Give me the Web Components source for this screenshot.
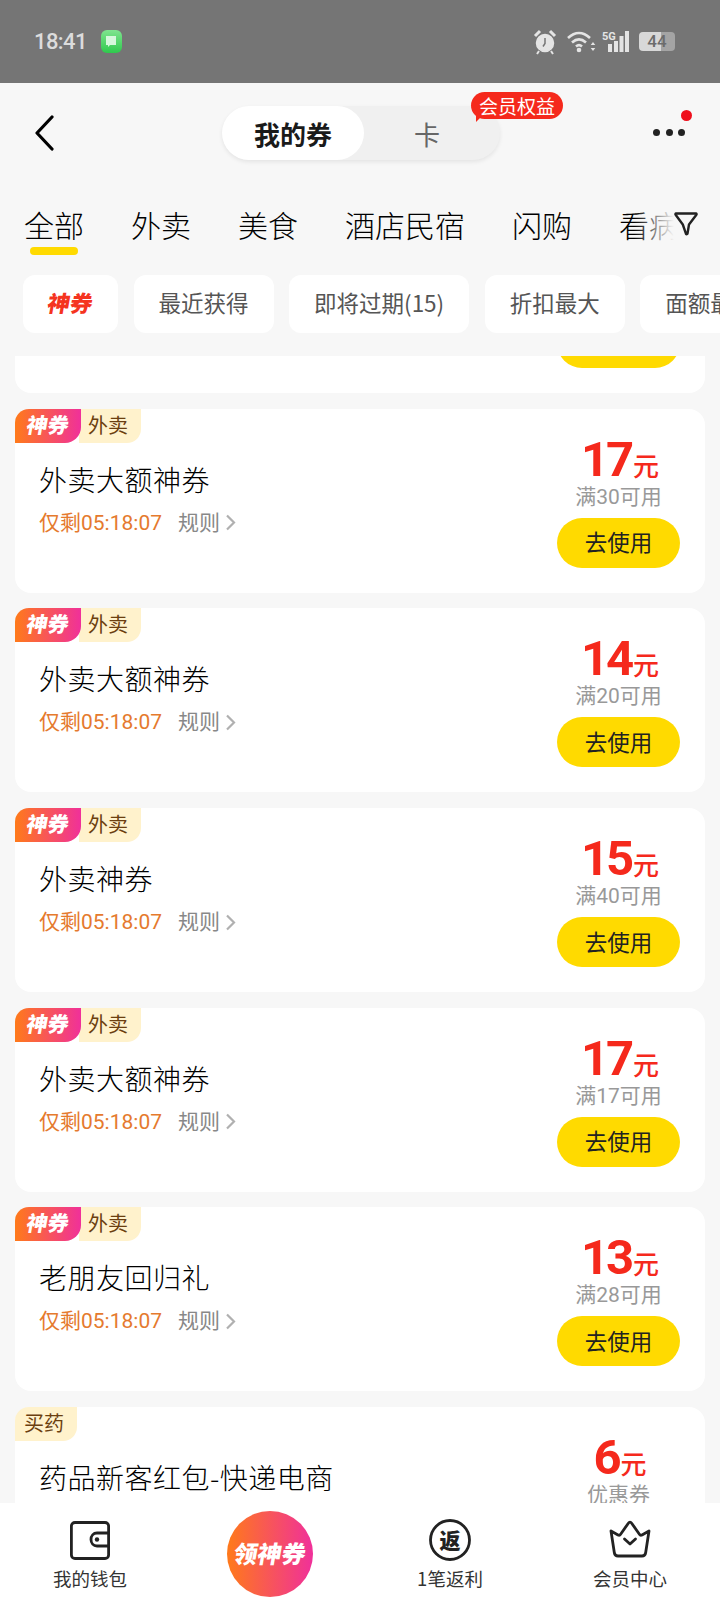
<!DOCTYPE html>
<html lang="zh">
<head>
<meta charset="utf-8">
<title>我的券</title>
<style>
    html, body { margin: 0; padding: 0; }
    body {
        width: 720px;
        height: 1604px;
        overflow: hidden;
        display: flex;
        flex-direction: column;
        background: #f7f7f7;
        color: #222;
        font-family: Roboto, "Noto Sans CJK SC", sans-serif;
    }
</style>
</head>
<body>
<status-bar></status-bar>
<top-nav></top-nav>
<tab-row></tab-row>
<chip-row>
    <filter-chip hot>神券</filter-chip>
    <filter-chip>最近获得</filter-chip>
    <filter-chip>即将过期(15)</filter-chip>
    <filter-chip>折扣最大</filter-chip>
    <filter-chip>面额最大</filter-chip>
</chip-row>
<coupon-list>
    <coupon-card hot tag="外卖" price="20" cond="满40可用">外卖神券</coupon-card>
    <coupon-card hot tag="外卖" price="17" cond="满30可用">外卖大额神券</coupon-card>
    <coupon-card hot tag="外卖" price="14" cond="满20可用">外卖大额神券</coupon-card>
    <coupon-card hot tag="外卖" price="15" cond="满40可用">外卖神券</coupon-card>
    <coupon-card hot tag="外卖" price="17" cond="满17可用">外卖大额神券</coupon-card>
    <coupon-card hot tag="外卖" price="13" cond="满28可用">老朋友回归礼</coupon-card>
    <coupon-card tag="买药" price="6" cond="优惠券">药品新客红包-快递电商</coupon-card>
</coupon-list>
<bottom-nav></bottom-nav>

<script>
class StatusBar extends HTMLElement {
    constructor() {
        super();
        this.attachShadow({ mode: 'open' });
        this.shadowRoot.innerHTML = `
            <style>
                :host {
                    display: flex;
                    flex: none;
                    align-items: center;
                    height: 83px;
                    padding: 0 45px 0 34px;
                    box-sizing: border-box;
                    background: #757575;
                    color: #dcdcdc;
                }
                .time { font: 500 22px/1 Roboto, sans-serif; letter-spacing: -0.6px; }
                .app {
                    display: grid;
                    place-items: center;
                    width: 21px;
                    height: 23px;
                    margin-left: 14px;
                    border-radius: 6px;
                    background: linear-gradient(180deg, #7fe48f 0, #2fc94d 100%);
                }
                .icons { display: flex; align-items: center; margin-left: auto; }
                svg { display: block; }
                .battery {
                    display: grid;
                    place-items: center;
                    width: 36px;
                    height: 19px;
                    margin-left: 9px;
                    border-radius: 4px;
                    background: linear-gradient(90deg, #d8d8d8 0 62%, #a4a4a4 62% 100%);
                    color: #6c6c6c;
                    font: 500 17px/1 Roboto, sans-serif;
                }
            </style>
            <span class="time">18:41</span>
            <span class="app">
                <svg width="14" height="14" viewBox="0 0 14 14"><path d="M2 1h10v9H6l-2 2v-2H2z" fill="#d6f7dc"/></svg>
            </span>
            <span class="icons">
                <svg width="24" height="26" viewBox="0 0 24 26" fill="none" stroke="#e4e4e4">
                    <circle cx="12" cy="14" r="8.5" fill="#e4e4e4" stroke-width="1.5"/>
                    <path d="M12 9v5.5l-2 3" stroke="#757575" stroke-width="1.5"/>
                    <path d="M2 7l5-5M22 7l-5-5" stroke-width="3"/>
                    <path d="M6 22l-2 3M18 22l2 3" stroke-width="2"/>
                </svg>
                <svg style="margin-left:9px" width="30" height="24" viewBox="0 0 30 24" fill="none" stroke="#e4e4e4" stroke-width="2.6">
                    <path d="M2 8c7-6.5 15-6.5 22 0"/>
                    <path d="M6 12.5c4.500-4 9.500-4 14 0"/>
                    <path d="M10 16.500c2-1.800 4-1.800 6 0"/>
                    <circle cx="13" cy="20" r="2.300" fill="#e4e4e4" stroke="none"/>
                    <path d="M27 12l-2.300 3h4.600zM27 21l-2.300-3h4.600z" fill="#e4e4e4" stroke="none"/>
                </svg>
                <svg style="margin-left:6px" width="28" height="22" viewBox="0 0 28 22">
                    <text x="0" y="9" font-family="Roboto, sans-serif" font-size="11" font-weight="700" fill="#e4e4e4">5G</text>
                    <rect x="6" y="13" width="4" height="8" fill="#e4e4e4"/>
                    <rect x="12" y="10" width="4" height="11" fill="#e4e4e4"/>
                    <rect x="17.500" y="5" width="4" height="16" fill="#e4e4e4"/>
                    <rect x="23" y="0" width="4" height="21" fill="#e4e4e4"/>
                </svg>
                <span class="battery">44</span>
            </span>
        `;
    }
}

class TopNav extends HTMLElement {
    constructor() {
        super();
        this.attachShadow({ mode: 'open' });
        this.shadowRoot.innerHTML = `
            <style>
                :host {
                    display: flex;
                    flex: none;
                    position: relative;
                    align-items: center;
                    height: 100px;
                    padding: 0 35px 0 34px;
                    box-sizing: border-box;
                }
                svg { display: block; }
                .seg {
                    display: flex;
                    position: relative;
                    width: 278px;
                    height: 54px;
                    margin-left: 168px;
                    border-radius: 27px;
                    background: #f0f0f0;
                    box-shadow: 0 2px 4px rgba(0, 0, 0, 0.08);
                }
                .on, .off { display: grid; place-items: center; height: 54px; font-family: "Noto Sans CJK SC", sans-serif; }
                .on {
                    width: 142px;
                    border-radius: 27px;
                    background: #fff;
                    font-size: 26px;
                    font-weight: 700;
                    color: #1a1a1a;
                }
                .off { flex: 1; padding-right: 10px; font-size: 26px; color: #666; }
                .badge {
                    position: absolute;
                    left: 249px;
                    top: -14px;
                    width: 92px;
                    height: 27px;
                    border-radius: 14px;
                    background: #f5291c;
                    color: #fff;
                    font: 19px/27px "Noto Sans CJK SC", sans-serif;
                    text-align: center;
                }
                .badge::after {
                    content: '';
                    position: absolute;
                    left: 5px;
                    bottom: -3px;
                    width: 0;
                    height: 0;
                    border-top: 6px solid #f5291c;
                    border-right: 6px solid transparent;
                }
                .more { position: relative; margin-left: auto; display: flex; gap: 5.500px; margin-top: -1px; }
                .more i { display: block; width: 7px; height: 7px; border-radius: 50%; background: #222; }
                .dot {
                    position: absolute;
                    right: -7px;
                    top: -19px;
                    width: 11px;
                    height: 11px;
                    border-radius: 50%;
                    background: #ef0f1c;
                }
            </style>
            <svg width="20" height="36" viewBox="0 0 20 36" fill="none" stroke="#000" stroke-width="3.2" stroke-linecap="round" stroke-linejoin="round">
                <path d="M18 2L3 18l15 16"/>
            </svg>
            <div class="seg">
                <span class="on">我的券</span>
                <span class="off">卡</span>
                <span class="badge">会员权益</span>
            </div>
            <div class="more"><i></i><i></i><i></i><span class="dot"></span></div>
        `;
    }
}

class TabRow extends HTMLElement {
    constructor() {
        super();
        this.attachShadow({ mode: 'open' });
        const tabs = ['全部', '外卖', '美食', '酒店民宿', '闪购', '看病'];
        this.shadowRoot.innerHTML = `
            <style>
                :host {
                    display: block;
                    flex: none;
                    position: relative;
                    height: 84px;
                    overflow: hidden;
                }
                .track {
                    display: flex;
                    gap: 47px;
                    padding: 18px 0 0 24px;
                    white-space: nowrap;
                    font: 300 30px/46px "Noto Sans CJK SC", sans-serif;
                    color: #000;
                }
                .tab { position: relative; flex: none; }
                .tab.active::after {
                    content: '';
                    position: absolute;
                    left: 6px;
                    right: 6px;
                    bottom: -8px;
                    height: 8px;
                    border-radius: 4px;
                    background: #ffda00;
                }
                .fade {
                    position: absolute;
                    right: 0;
                    top: 0;
                    display: flex;
                    align-items: flex-start;
                    justify-content: flex-end;
                    width: 86px;
                    height: 84px;
                    padding: 28px 22px 0 0;
                    box-sizing: border-box;
                    background: linear-gradient(90deg, rgba(247, 247, 247, 0) 0, #f7f7f7 40px);
                }
            </style>
            <div class="track">
                ${tabs.map((t, i) => `<span class="tab${i === 0 ? ' active' : ''}">${t}</span>`).join('')}
            </div>
            <div class="fade">
                <svg width="24" height="26" viewBox="0 0 24 26" fill="none" stroke="#222" stroke-width="2.400" stroke-linejoin="round">
                    <path d="M2 2.500h20c.5 0 .8.600.4 1.200L15 13.500l-1.500 9c-.1.700-1 1-1.500.4L8.800 13.500 1.600 3.700C1.200 3.100 1.500 2.500 2 2.500z"/>
                </svg>
            </div>
        `;
    }
}

class ChipRow extends HTMLElement {
    constructor() {
        super();
        this.attachShadow({ mode: 'open' });
        this.shadowRoot.innerHTML = `
            <style>
                :host {
                    display: flex;
                    flex: none;
                    gap: 15.500px;
                    height: 58px;
                    margin-top: 8px;
                    padding-left: 23px;
                    overflow: hidden;
                }
            </style>
            <slot></slot>
        `;
    }
}

class FilterChip extends HTMLElement {
    constructor() {
        super();
        this.attachShadow({ mode: 'open' });
        this.shadowRoot.innerHTML = `
            <style>
                :host {
                    display: flex;
                    flex: none;
                    align-items: center;
                    padding: 0 25px 5px;
                    box-sizing: border-box;
                    border-radius: 12px;
                    background: #fff;
                    color: #555;
                    font: 22.500px "Noto Sans CJK SC", sans-serif;
                    white-space: nowrap;
                }
                :host([hot]) {
                    color: #f5341f;
                    font-weight: 900;
                }
                :host([hot]) .txt { display: inline-block; transform: skewX(-10deg); }
            </style>
            <span class="txt"><slot></slot></span>
        `;
    }
}

class CouponList extends HTMLElement {
    constructor() {
        super();
        this.attachShadow({ mode: 'open' });
        this.shadowRoot.innerHTML = `
            <style>
                :host {
                    display: block;
                    flex: 1;
                    min-height: 0;
                    margin-top: 23px;
                    overflow: hidden;
                }
                .scroll {
                    display: flex;
                    flex-direction: column;
                    gap: 15.700px;
                    margin: -147px 15px 0;
                }
            </style>
            <div class="scroll"><slot></slot></div>
        `;
    }
}

class CouponCard extends HTMLElement {
    constructor() {
        super();
        this.attachShadow({ mode: 'open' });
    }

    connectedCallback() {
        const tag = this.getAttribute('tag');
        const price = this.getAttribute('price');
        const cond = this.getAttribute('cond');
        const hot = this.hasAttribute('hot');
        this.shadowRoot.innerHTML = `
            <style>
                :host {
                    display: flex;
                    position: relative;
                    flex: none;
                    justify-content: space-between;
                    height: 184px;
                    padding: 0 25px 0 24px;
                    box-sizing: border-box;
                    border-radius: 16px;
                    background: #fff;
                    font-family: "Noto Sans CJK SC", sans-serif;
                }
                .tags { position: absolute; left: 0; top: 0; display: flex; }
                .hot {
                    position: relative;
                    z-index: 1;
                    width: 66px;
                    height: 34px;
                    border-radius: 14px 0 16px 0;
                    background: linear-gradient(90deg, #ff7a1a 0, #f0309a 100%);
                    color: #fff;
                    font-size: 21px;
                    font-weight: 900;
                    line-height: 31px;
                    text-align: center;
                }
                .hot b { display: inline-block; font-weight: 900; transform: skewX(-10deg); }
                .tag {
                    height: 34px;
                    padding: 0 13px 0 8px;
                    border-radius: 0 0 14px 0;
                    background: #fff2cc;
                    color: #6b3f10;
                    font-size: 20px;
                    line-height: 31px;
                }
                .hot + .tag { margin-left: -2px; padding-left: 9px; }
                .tag:first-child { border-radius: 14px 0 14px 0; padding-left: 9px; }
                .left { display: flex; flex-direction: column; padding-top: 50px; }
                .title { font-size: 28px; font-weight: 300; line-height: 40px; letter-spacing: 0.5px; color: #000; white-space: nowrap; }
                .meta {
                    display: flex;
                    align-items: center;
                    margin-top: 10px;
                    height: 28px;
                    font: 21px/28px Roboto, "Noto Sans CJK SC", sans-serif;
                    white-space: nowrap;
                }
                .left-time { color: #e57a2e; }
                .rule { margin-left: 16px; color: #888; }
                .meta svg { margin-left: 5px; }
                .right { display: flex; flex-direction: column; align-items: center; width: 123px; padding-top: 26px; }
                .price { display: flex; align-items: baseline; height: 50px; margin-left: 3px; color: #f5291c; line-height: 50px; }
                .num { font: 700 49px/50px Roboto, sans-serif; letter-spacing: -3px; }
                .unit { margin-left: 2px; font-size: 26px; font-weight: 500; }
                .cond { margin-top: -2px; color: #999; font: 21px/28px Roboto, "Noto Sans CJK SC", sans-serif; white-space: nowrap; }
                .use {
                    display: grid;
                    place-items: center;
                    width: 123px;
                    height: 50px;
                    margin-top: 7px;
                    padding-bottom: 3px;
                    box-sizing: border-box;
                    border-radius: 25px;
                    background: #ffda00;
                    color: #222;
                    font-size: 22.500px;
                }
            </style>
            <div class="tags">
                ${hot ? '<span class="hot"><b>神券</b></span>' : ''}
                <span class="tag">${tag}</span>
            </div>
            <div class="left">
                <div class="title"><slot></slot></div>
                <div class="meta">
                    <span class="left-time">仅剩05:18:07</span>
                    <span class="rule">规则</span>
                    <svg width="11" height="17" viewBox="0 0 11 17" fill="none" stroke="#b0b0b0" stroke-width="2.200"><path d="M2 1.500l7 7-7 7"/></svg>
                </div>
            </div>
            <div class="right">
                <div class="price"><span class="num">${price}</span><span class="unit">元</span></div>
                <div class="cond">${cond}</div>
                <div class="use">去使用</div>
            </div>
        `;
    }
}

class BottomNav extends HTMLElement {
    constructor() {
        super();
        this.attachShadow({ mode: 'open' });
        this.shadowRoot.innerHTML = `
            <style>
                :host {
                    display: grid;
                    grid-template-columns: 180px 180px 180px 180px;
                    flex: none;
                    height: 101px;
                    background: #fff;
                    font-family: "Noto Sans CJK SC", sans-serif;
                }
                .item {
                    display: flex;
                    flex-direction: column;
                    align-items: center;
                    height: 101px;
                    padding-top: 15px;
                    box-sizing: border-box;
                    color: #333;
                    font-size: 18.500px;
                    line-height: 26px;
                    white-space: nowrap;
                }
                .item svg { display: block; height: 44px; margin-bottom: 3px; }
                .get {
                    display: grid;
                    place-items: center;
                    width: 86px;
                    height: 86px;
                    margin: 8px 0 0 47px;
                    padding-bottom: 3px;
                    box-sizing: border-box;
                    border-radius: 50%;
                    background: linear-gradient(90deg, #ff7a1a 0, #f0309a 100%);
                    color: #fff;
                    font-size: 24px;
                    font-weight: 900;
                    white-space: nowrap;
                }
                .get b { display: inline-block; font-weight: 900; transform: skewX(-10deg); }
            </style>
            <div class="item">
                <svg width="40" height="44" viewBox="0 0 40 44" fill="none" stroke="#222" stroke-width="2.800" stroke-linejoin="round">
                    <path d="M5 4.500h30c2 0 3.600 1.600 3.600 3.600v28.800c0 2-1.600 3.600-3.600 3.600H5c-2 0-3.600-1.600-3.600-3.600V8.100c0-2 1.600-3.600 3.600-3.600z"/>
                    <path d="M38.600 15H27c-3.600 0-6 3-6 6.500s2.400 6.500 6 6.500h11.600"/>
                    <circle cx="27" cy="21.500" r="2.200" fill="#222" stroke="none"/>
                </svg>
                <span>我的钱包</span>
            </div>
            <div><div class="get"><b>领神券</b></div></div>
            <div class="item">
                <svg width="44" height="44" viewBox="0 0 44 44">
                    <circle cx="22" cy="22" r="19.500" fill="none" stroke="#222" stroke-width="2.800"/>
                    <text x="22" y="30" text-anchor="middle" font-family="Noto Sans CJK SC, sans-serif" font-size="21" font-weight="900" fill="#222">返</text>
                </svg>
                <span>1笔返利</span>
            </div>
            <div class="item">
                <svg width="44" height="44" viewBox="0 0 44 44" fill="none" stroke="#222" stroke-width="2.800" stroke-linejoin="round" stroke-linecap="round">
                    <path d="M3 13l7 4c1 .5 2 .2 2.600-.8L20.500 5c.8-1.200 2.200-1.200 3 0l7.900 11.200c.6 1 1.600 1.300 2.600.8l7-4-3.300 21.500c-.3 2.200-1.700 3.500-3.700 3.500H10c-2 0-3.400-1.300-3.700-3.500z"/>
                    <path d="M16.500 21l5.500 5 5.500-5"/>
                </svg>
                <span>会员中心</span>
            </div>
        `;
    }
}

customElements.define('status-bar', StatusBar);
customElements.define('top-nav', TopNav);
customElements.define('tab-row', TabRow);
customElements.define('chip-row', ChipRow);
customElements.define('filter-chip', FilterChip);
customElements.define('coupon-list', CouponList);
customElements.define('coupon-card', CouponCard);
customElements.define('bottom-nav', BottomNav);
</script>
</body>
</html>
